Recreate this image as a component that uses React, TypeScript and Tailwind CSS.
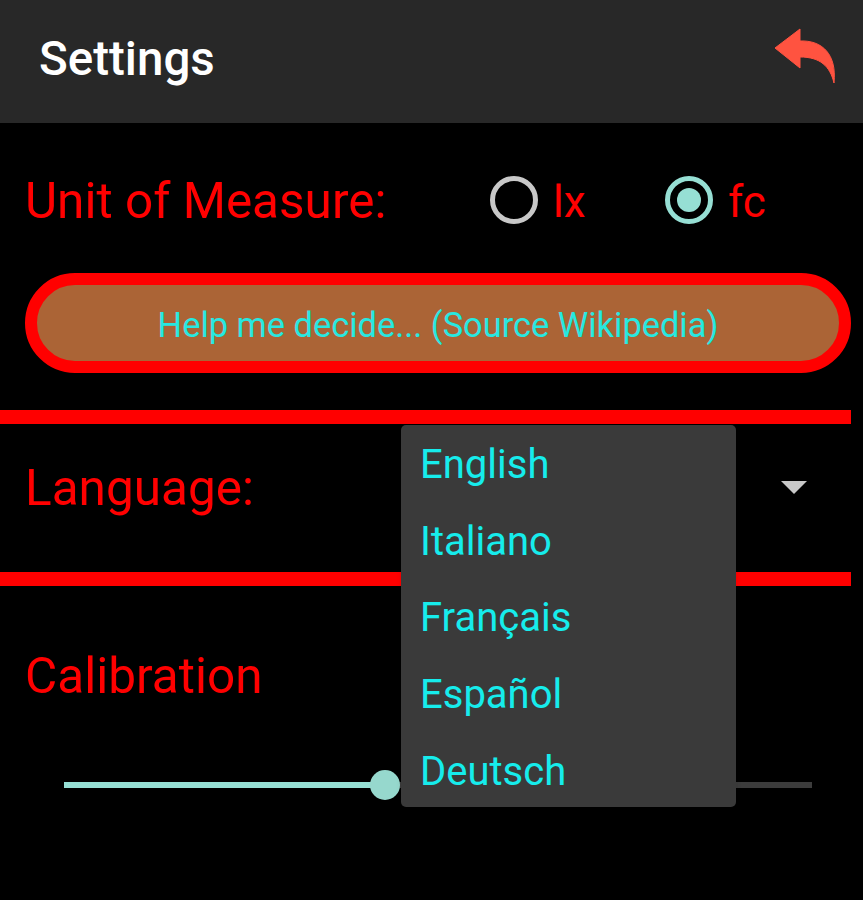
const font = { fontFamily: 'Roboto, "Noto Sans", sans-serif' };

const languages = ['English', 'Italiano', 'Français', 'Español', 'Deutsch'];

export default function App() {
  return (
    <div className="relative h-[900px] w-[863px] overflow-hidden bg-black" style={font}>
      <header className="flex h-[123px] items-start justify-between bg-[#282828] pl-[39px] pr-[25px]">
        <h1 className="mt-[33px] text-[47.5px] leading-[52px] font-medium text-white">Settings</h1>
        <svg className="mt-[28px]" width="64" height="56" viewBox="0 0 64 56">
          <path
            d="M1 20 L26 1 L26 13 C48 12 63 26 60 55 C56 38 46 29 26 29 L26 40 Z"
            fill="#ff5340"
            stroke="#ff5340"
            strokeWidth="1"
            strokeLinejoin="round"
          />
        </svg>
      </header>

      <section className="flex h-[150px] items-start pl-[25px]">
        <span className="mt-[51px] w-[465px] text-[49.5px] leading-[54px] text-[#ff0000]">Unit of Measure:</span>
        <div className="mt-[51px] flex items-center">
          <span className="h-12 w-12 rounded-full border-[5px] border-[#c8c8c8]" />
          <span className="ml-[15px] mt-[4px] w-[112px] text-[44px] leading-[48px] text-[#ff0000]">lx</span>
          <span className="flex h-12 w-12 items-center justify-center rounded-full border-[5px] border-[#96dfd4]">
            <span className="h-[24px] w-[24px] rounded-full bg-[#96dfd4]" />
          </span>
          <span className="ml-[15px] mt-[4px] text-[44px] leading-[48px] text-[#ff0000]">fc</span>
        </div>
      </section>

      <div className="pl-[25px] pr-[12px]">
        <button className="flex h-[100px] w-[826px] items-center justify-center rounded-full border-[12px] border-[#ff0000] bg-[#ab6436] pt-[6px] text-[34.4px] text-[#27e8e0]">
          Help me decide... (Source Wikipedia)
        </button>
      </div>

      <div className="mt-[37px] h-[14px] w-[851px] bg-[#ff0000]" />

      <section className="flex h-[148px] items-center justify-between pb-[22px] pl-[25px] pr-[56px]">
        <span className="mt-[2px] text-[49.5px] leading-[54px] text-[#ff0000]">Language:</span>
        <span className="h-0 w-0 border-x-[13px] border-t-[13px] border-x-transparent border-t-[#c8c8c8]" />
      </section>

      <div className="h-[14px] w-[851px] bg-[#ff0000]" />

      <section className="pl-[25px]">
        <h2 className="mt-[63px] text-[49.5px] leading-[54px] text-[#ff0000]">Calibration</h2>
        <div className="relative ml-[39px] mt-[79px] h-[6px] w-[748px] bg-[#3c3c3c]">
          <div className="h-full w-[321px] bg-[#96dfd4]" />
          <span className="absolute left-[306px] top-[-12px] h-[30px] w-[30px] rounded-full bg-[#96d8cd]" />
        </div>
      </section>

      <ul className="absolute left-[401px] top-[425px] h-[382px] w-[335px] rounded-[5px] bg-[#3a3a3a] pl-[19px] pt-[2px] shadow-md">
        {languages.map((lang) => (
          <li key={lang} className="flex h-[76.6px] items-center text-[40px] text-[#16ecec]">
            {lang}
          </li>
        ))}
      </ul>
    </div>
  );
}
